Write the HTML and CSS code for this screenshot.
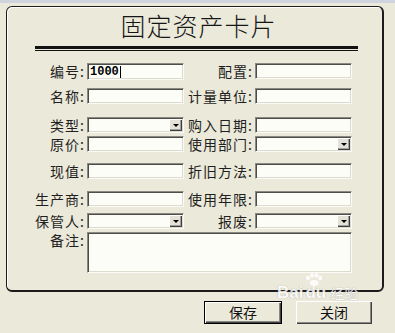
FILE: index.html
```html
<!DOCTYPE html>
<html lang="zh-CN">
<head>
<meta charset="utf-8">
<title>固定资产卡片</title>
<link rel="stylesheet" href="styles.css">
</head>
<body>
<div class="topbar"></div>
<div class="card">
  <div class="title">固定资产卡片</div>
  <div class="rule"></div>
  <div class="form">
    <div class="lbl">编号:</div>
    <div class="fld tall"><span class="val">1000</span><span class="caret"></span></div>
    <div class="lbl">配置:</div>
    <div class="fld"></div>

    <div class="lbl">名称:</div>
    <div class="fld"></div>
    <div class="lbl">计量单位:</div>
    <div class="fld"></div>

    <div class="lbl">类型:</div>
    <div class="fld sel"><span class="dd"><span class="tri"></span></span></div>
    <div class="lbl">购入日期:</div>
    <div class="fld"></div>

    <div class="lbl">原价:</div>
    <div class="fld"></div>
    <div class="lbl">使用部门:</div>
    <div class="fld sel"><span class="dd"><span class="tri"></span></span></div>

    <div class="lbl">现值:</div>
    <div class="fld"></div>
    <div class="lbl">折旧方法:</div>
    <div class="fld"></div>

    <div class="lbl">生产商:</div>
    <div class="fld"></div>
    <div class="lbl">使用年限:</div>
    <div class="fld"></div>

    <div class="lbl">保管人:</div>
    <div class="fld sel"><span class="dd"><span class="tri"></span></span></div>
    <div class="lbl">报废:</div>
    <div class="fld sel"><span class="dd"><span class="tri"></span></span></div>

    <div class="lbl">备注:</div>
    <div class="fld memo"></div>
  </div>
</div>
<div class="actions">
  <div class="btn btn-save">保存</div>
  <div class="btn btn-close">关闭</div>
</div>
<div class="watermark">
  <span class="wm-bai">Bai</span><span class="wm-du"><svg class="paw" width="20" height="13" viewBox="0 0 20 13"><ellipse cx="4" cy="5" rx="2" ry="2.4"/><ellipse cx="8" cy="2.4" rx="2" ry="2.4"/><ellipse cx="12.5" cy="2.4" rx="2" ry="2.4"/><ellipse cx="16.3" cy="5" rx="2" ry="2.4"/><ellipse cx="10.2" cy="10" rx="4.4" ry="3"/></svg>du</span><span class="wm-jy">经验</span>
</div>
</body>
</html>
```

FILE: styles.css
```css
html, body {
  margin: 0;
  padding: 0;
}
body {
  width: 395px;
  height: 333px;
  overflow: hidden;
  position: relative;
  background: #ebe9da;
  font-family: "Noto Sans CJK SC", "Liberation Sans", sans-serif;
  color: #1a1a1a;
}
.topbar {
  height: 3px;
  background: #cfd4de;
}
.card {
  box-sizing: border-box;
  width: 378px;
  margin: 3px 0 0 6px;
  border: 1px solid #1c1c1c;
  border-right-width: 2px;
  border-bottom-width: 2px;
  border-radius: 6px;
  padding: 6px 0 17px;
  box-shadow: inset 1px 1px 0 #ffffff;
}
.title {
  font-size: 25px;
  line-height: 25px;
  font-weight: 300;
  letter-spacing: 1px;
  text-align: center;
  padding-left: 8px;
  color: #151515;
}
.rule {
  margin: 8px 24px 0 28px;
  height: 1px;
  border-top: 3px solid #111;
  border-bottom: 1px solid #111;
}
.form {
  display: grid;
  margin-top: 12px;
  grid-template-columns: 80px 97px 71px 97px;
  grid-template-rows: 25px 29px 19px 27px 28px 22px 19px 41px;
}
.lbl {
  font-size: 14px;
  line-height: 16px;
  height: 16px;
  letter-spacing: 1px;
  text-align: right;
  padding-right: 2px;
  white-space: nowrap;
  color: #1f1f1f;
}
.fld {
  box-sizing: border-box;
  height: 16px;
  padding: 1px;
  background: #fdfdf7;
  border: 1px solid;
  border-color: #8a8a82 #fbfbf6 #fbfbf6 #8a8a82;
  box-shadow: inset 1px 1px 0 #4e4e49, inset -1px -1px 0 #dddbd0;
  display: flex;
  align-items: center;
}
.fld.tall {
  height: 17px;
}
.val {
  font-family: "Liberation Mono", monospace;
  font-weight: bold;
  font-size: 12px;
  line-height: 12px;
  color: #000;
  padding-left: 1px;
}
.caret {
  width: 1px;
  height: 12px;
  background: #000;
  margin-left: 1px;
}
.sel {
  justify-content: flex-end;
  align-items: stretch;
}
.dd {
  width: 13px;
  background: #e4e2d6;
  box-shadow: inset 1px 1px 0 #ffffff, inset -1px -1px 0 #404040, inset -2px -2px 0 #a0a0a0;
  display: flex;
  align-items: center;
  justify-content: center;
}
.tri {
  width: 0;
  height: 0;
  border-left: 3px solid transparent;
  border-right: 3px solid transparent;
  border-top: 3px solid #000;
  margin-top: 1px;
}
.memo {
  grid-column: 2 / 5;
  height: 41px;
}
.actions {
  display: flex;
  justify-content: flex-end;
  gap: 14px;
  margin: 9px 23px 0 0;
}
.btn {
  box-sizing: border-box;
  height: 23px;
  font-size: 14px;
  line-height: 21px;
  text-align: center;
  background: #ebe9da;
  color: #111;
}
.btn-save {
  width: 78px;
  border: 1px solid #000;
  box-shadow: inset 1px 1px 0 #ffffff, inset -1px -1px 0 #404040, inset -2px -2px 0 #8a8a84;
}
.btn-close {
  width: 76px;
  line-height: 23px;
  box-shadow: inset 1px 1px 0 #ffffff, inset -1px -1px 0 #404040, inset -2px -2px 0 #8a8a84;
}
.watermark {
  position: absolute;
  left: 277px;
  top: 283px;
  display: flex;
  align-items: flex-end;
  color: #ffffff;
  opacity: 0.85;
  text-shadow: 0 0 1px rgba(110, 110, 110, 0.8);
  white-space: nowrap;
}
.wm-bai {
  font-family: "Liberation Sans", sans-serif;
  font-weight: bold;
  font-size: 17px;
  line-height: 20px;
}
.wm-du {
  position: relative;
  font-family: "Liberation Sans", sans-serif;
  font-weight: bold;
  font-size: 17px;
  line-height: 20px;
  padding-left: 2px;
}
.paw {
  position: absolute;
  left: 1px;
  top: -10px;
  fill: #ffffff;
}
.wm-jy {
  font-size: 14px;
  line-height: 20px;
  margin-left: 4px;
}
```
